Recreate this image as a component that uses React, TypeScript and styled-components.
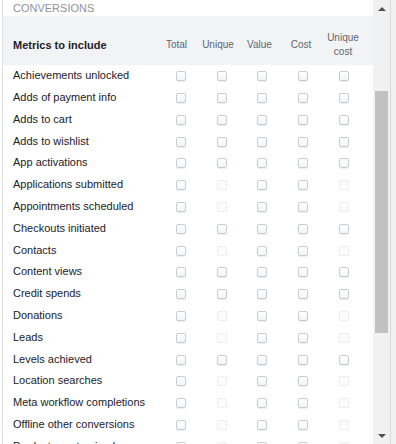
import styled, { createGlobalStyle } from "styled-components";

interface Metric {
  name: string;
  limited?: boolean;
}

const metrics: Metric[] = [
  { name: "Achievements unlocked" },
  { name: "Adds of payment info" },
  { name: "Adds to cart" },
  { name: "Adds to wishlist" },
  { name: "App activations" },
  { name: "Applications submitted", limited: true },
  { name: "Appointments scheduled", limited: true },
  { name: "Checkouts initiated" },
  { name: "Contacts", limited: true },
  { name: "Content views" },
  { name: "Credit spends" },
  { name: "Donations", limited: true },
  { name: "Leads", limited: true },
  { name: "Levels achieved" },
  { name: "Location searches", limited: true },
  { name: "Meta workflow completions", limited: true },
  { name: "Offline other conversions", limited: true },
  { name: "Products customized", limited: true },
];

const columns = ["Total", "Unique", "Value", "Cost", "Unique cost"];

const App = (): JSX.Element => {
  return (
    <>
      <GlobalStyle />
      <Frame>
        <Panel>
          <SectionTitle>Conversions</SectionTitle>
          <HeaderRow>
            <HeaderLabel>Metrics to include</HeaderLabel>
            {columns.map(col => (
              <ColHead key={col}>{col}</ColHead>
            ))}
          </HeaderRow>
          {metrics.map(m => (
            <MetricRow key={m.name}>
              <MetricName>{m.name}</MetricName>
              <Check />
              <Check $disabled={m.limited} />
              <Check />
              <Check />
              <Check $disabled={m.limited} />
            </MetricRow>
          ))}
        </Panel>
        <ScrollBar>
          <ScrollArrow>
            <ArrowUp />
          </ScrollArrow>
          <ScrollTrack>
            <Thumb />
          </ScrollTrack>
          <ScrollArrow>
            <ArrowDown />
          </ScrollArrow>
        </ScrollBar>
        <Edge />
      </Frame>
    </>
  );
};

export default App;

const GlobalStyle = createGlobalStyle`
  html, body {
    margin: 0;
    padding: 0;
    background: #fff;
    overflow: hidden;
  }
  body {
    font-family: "Liberation Sans", Arial, sans-serif;
  }
`;

const Frame = styled.div`
  display: flex;
  width: 396px;
  height: 444px;
  overflow: hidden;
`;

const Panel = styled.div`
  flex: 1;
  margin-left: 2px;
  border-left: 1px solid #dddfe2;
  overflow: hidden;
`;

const SectionTitle = styled.div`
  height: 16px;
  line-height: 17px;
  padding-left: 10px;
  font-size: 11px;
  color: #90949c;
  text-transform: uppercase;
`;

const HeaderRow = styled.div`
  box-sizing: border-box;
  display: grid;
  grid-template-columns: 143px 41px 42px 41px 42px 42px;
  align-items: center;
  height: 49.3px;
  padding: 8px 0 0 10px;
  background: #f2f3f5;
`;

const HeaderLabel = styled.div`
  font-size: 11px;
  font-weight: bold;
  color: #1d2129;
  white-space: nowrap;
`;

const ColHead = styled.div`
  font-size: 10px;
  line-height: 13.5px;
  color: #606770;
  text-align: center;
`;

const MetricRow = styled.div`
  display: grid;
  grid-template-columns: 147px 41px 41px 40px 41px 41px;
  align-items: center;
  height: 21.8px;
  padding-left: 10px;
`;

const MetricName = styled.div`
  margin-bottom: 2px;
  font-size: 11px;
  color: #1d2129;
  white-space: nowrap;
`;

const Check = styled.span<{ $disabled?: boolean }>`
  box-sizing: border-box;
  justify-self: center;
  width: 10px;
  height: 10px;
  border-radius: 2px;
  border: 1px solid ${p => (p.$disabled ? "#eceef0" : "#c9ccd1")};
  background: ${p =>
    p.$disabled ? "#fcfcfd" : "linear-gradient(#ffffff, #f3f4f6)"};
  box-shadow: ${p =>
    p.$disabled ? "none" : "0 1px 1px rgba(0, 0, 0, 0.07)"};
`;

const ScrollBar = styled.div`
  width: 17px;
  display: flex;
  flex-direction: column;
  background: #f1f1f1;
`;

const ScrollArrow = styled.div`
  height: 17px;
  display: flex;
  align-items: center;
  justify-content: center;
`;

const ArrowUp = styled.span`
  width: 0;
  height: 0;
  border-left: 4px solid transparent;
  border-right: 4px solid transparent;
  border-bottom: 4px solid #505050;
`;

const ArrowDown = styled.span`
  width: 0;
  height: 0;
  border-left: 4px solid transparent;
  border-right: 4px solid transparent;
  border-top: 4px solid #505050;
`;

const ScrollTrack = styled.div`
  flex: 1;
  padding: 74px 2px 0;
`;

const Thumb = styled.div`
  height: 242px;
  background: #c1c1c1;
`;

const Edge = styled.div`
  width: 5px;
  border-left: 1px solid #dadada;
  background: #f0f0f0;
`;
